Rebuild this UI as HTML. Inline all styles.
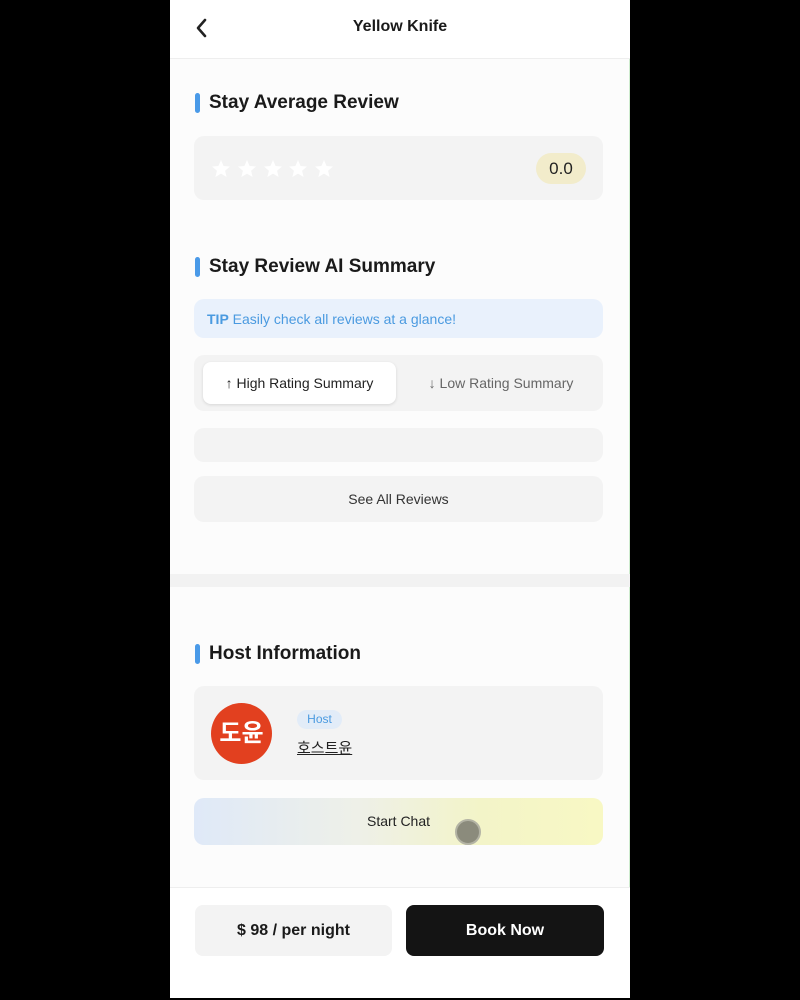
<!DOCTYPE html>
<html><head><meta charset="utf-8"><style>
*{margin:0;padding:0;box-sizing:border-box}
body{width:800px;height:1000px;background:#000;font-family:"Liberation Sans","Noto Sans CJK KR",sans-serif;position:relative;overflow:hidden}
.page{position:absolute;left:170px;top:0;width:460px;height:998px;background:#fcfcfc;border-right:1px solid #cfeccf}
.a{position:absolute}
.h{font-weight:bold;font-size:19px;color:#1a1a1a}
.bar{position:absolute;width:5px;height:20px;background:#4a9ae8;border-radius:3px}
.card{position:absolute;left:24px;width:409px;background:#f3f3f3;border-radius:10px}
</style></head><body>
<div class="page">
<div class="a" style="left:0;top:0;width:460px;height:59px;background:#fff;border-bottom:1px solid #eee"></div>
<svg class="a" style="left:24px;top:17px" width="16" height="22" viewBox="0 0 16 22"><path d="M11 3 L4 11 L11 19" fill="none" stroke="#222" stroke-width="2.6" stroke-linecap="round" stroke-linejoin="round"/></svg>
<div class="a" style="left:0;width:460px;top:18px;text-align:center;font-weight:bold;font-size:16px;color:#1a1a1a">Yellow Knife</div>

<div class="bar" style="left:25px;top:93px"></div>
<div class="a h" style="left:39px;top:92px">Stay Average Review</div>
<div class="card" style="top:136px;height:64px"></div>
<svg class="a" style="left:41px;top:159px" width="125" height="20" viewBox="0 0 125 20">
<defs><path id="s" d="M10 1 L12.6 7 L19 7.5 L14.1 11.7 L15.6 18 L10 14.6 L4.4 18 L5.9 11.7 L1 7.5 L7.4 7 Z" fill="#fff"/></defs>
<use href="#s" x="0"/><use href="#s" x="26"/><use href="#s" x="52"/><use href="#s" x="77"/><use href="#s" x="103"/></svg>
<div class="a" style="left:366px;top:153px;width:50px;height:31px;border-radius:16px;background:#f2eccb;text-align:center;line-height:31px;font-size:17px;color:#222">0.0</div>

<div class="bar" style="left:25px;top:257px"></div>
<div class="a h" style="left:39px;top:256px">Stay Review AI Summary</div>
<div class="card" style="top:299px;height:39px;background:#e9f1fc"></div>
<div class="a" style="left:37px;top:311px;font-size:14px;color:#4a9ae0"><b>TIP</b> Easily check all reviews at a glance!</div>
<div class="card" style="top:355px;height:56px"></div>
<div class="a" style="left:33px;top:362px;width:193px;height:42px;background:#fff;border-radius:8px;box-shadow:0 1px 3px rgba(0,0,0,.12);text-align:center;line-height:42px;font-size:14px;color:#222">↑ High Rating Summary</div>
<div class="a" style="left:236px;top:362px;width:190px;height:42px;text-align:center;line-height:42px;font-size:14px;color:#666">↓ Low Rating Summary</div>
<div class="card" style="top:428px;height:34px"></div>
<div class="card" style="top:476px;height:46px;text-align:center;line-height:46px;font-size:14px;color:#333">See All Reviews</div>

<div class="a" style="left:0;top:574px;width:460px;height:13px;background:#f2f2f2"></div>

<div class="bar" style="left:25px;top:644px"></div>
<div class="a h" style="left:39px;top:643px">Host Information</div>
<div class="card" style="top:686px;height:94px"></div>
<div class="a" style="left:41px;top:703px;width:61px;height:61px;border-radius:50%;background:#e2401f;color:#fff;text-align:center;line-height:61px;font-size:24px;font-weight:bold">도윤</div>
<div class="a" style="left:127px;top:710px;width:45px;height:19px;border-radius:10px;background:#e2ecf8;color:#4a9ae0;font-size:12px;text-align:center;line-height:19px">Host</div>
<div class="a" style="left:127px;top:737px;font-size:15px;color:#222;text-decoration:underline">호스트윤</div>
<div class="card" style="top:798px;height:47px;background:linear-gradient(90deg,#dfe9f8,#eef0e8 40%,#f3f4c8 70%,#f8f8c4);text-align:center;line-height:47px;font-size:14px;color:#222">Start Chat</div>
<div class="a" style="left:285px;top:819px;width:26px;height:26px;border-radius:50%;background:#8b8b7c;border:2px solid #b3b3a4"></div>

<div class="a" style="left:0;top:887px;width:460px;height:111px;background:#fff;border-top:1px solid #eee"></div>
<div class="a" style="left:25px;top:905px;width:197px;height:51px;background:#f3f3f3;border-radius:8px;text-align:center;line-height:51px;font-weight:bold;font-size:16px;color:#1a1a1a">$ 98 / per night</div>
<div class="a" style="left:236px;top:905px;width:198px;height:51px;background:#141414;border-radius:8px;text-align:center;line-height:51px;font-size:16px;font-weight:bold;color:#fff">Book Now</div>
</div>
</body></html>
